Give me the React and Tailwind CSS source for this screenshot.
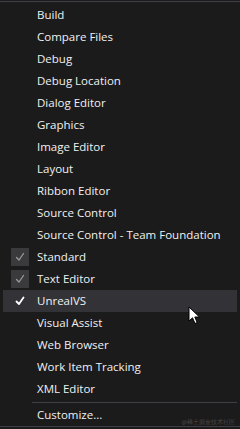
import React from 'react';

const items = [
    { label: 'Build' },
    { label: 'Compare Files' },
    { label: 'Debug' },
    { label: 'Debug Location' },
    { label: 'Dialog Editor' },
    { label: 'Graphics' },
    { label: 'Image Editor' },
    { label: 'Layout' },
    { label: 'Ribbon Editor' },
    { label: 'Source Control' },
    { label: 'Source Control - Team Foundation' },
    { label: 'Standard', check: 'box' },
    { label: 'Text Editor', check: 'box' },
    { label: 'UnrealVS', check: 'plain', hover: true },
    { label: 'Visual Assist' },
    { label: 'Web Browser' },
    { label: 'Work Item Tracking' },
    { label: 'XML Editor' },
];

const Check = ({ color, width }) => (
    <svg width="10" height="10" viewBox="0 0 10 10" fill="none">
        <path d="M1.5 5.5 L4 8 L8.5 1.5" stroke={color} strokeWidth={width} strokeLinecap="round" strokeLinejoin="round" />
    </svg>
);

const MenuRow = ({ label, check, hover }) => (
    <div className={`h-[22px] flex items-center ${hover ? 'bg-[#333337]' : ''}`}>
        <div className="w-[34px] flex items-center justify-center">
            {check === 'box' && (
                <div className="w-[18px] h-[18px] bg-[#3a3a3d] flex items-center justify-center">
                    <Check color="#9a9a9a" width="1.3" />
                </div>
            )}
            {check === 'plain' && <Check color="#ffffff" width="1.8" />}
        </div>
        <span className="text-[11.5px] text-[#f1f1f1] leading-none">{label}</span>
    </div>
);

export default function App() {
    return (
        <div
            className="w-[240px] h-[429px] bg-[#1b1b1c] relative overflow-hidden"
            style={{ fontFamily: '"Open Sans", "Noto Sans", sans-serif' }}
        >
            <div className="pt-[1px]">
                <div className="border-t border-[#3f3f46] h-[1px]" />
                <div className="ml-[3px] mr-[3px] pt-[2px]">
                    {items.map((it) => (
                        <MenuRow key={it.label} {...it} />
                    ))}
                    <div className="h-[4px] flex items-center pl-[29px]">
                        <div className="h-[1px] w-full bg-[#3f3f46]" />
                    </div>
                    <MenuRow label="Customize..." />
                </div>
                <div className="border-t border-[#3f3f46]" />
            </div>

            <span className="absolute right-[5px] bottom-[4px] text-[6px] text-[#4a4a4a] leading-none">
                @稀土掘金技术社区
            </span>

            <svg className="absolute left-[188px] top-[306px]" width="13" height="19" viewBox="0 0 13 19">
                <path d="M1 1 L1 15 L4.5 11.8 L7 17.5 L9.2 16.5 L6.8 11 L11.5 11 Z" fill="#ffffff" stroke="#000000" strokeWidth="1" strokeLinejoin="round" />
            </svg>
        </div>
    );
}
